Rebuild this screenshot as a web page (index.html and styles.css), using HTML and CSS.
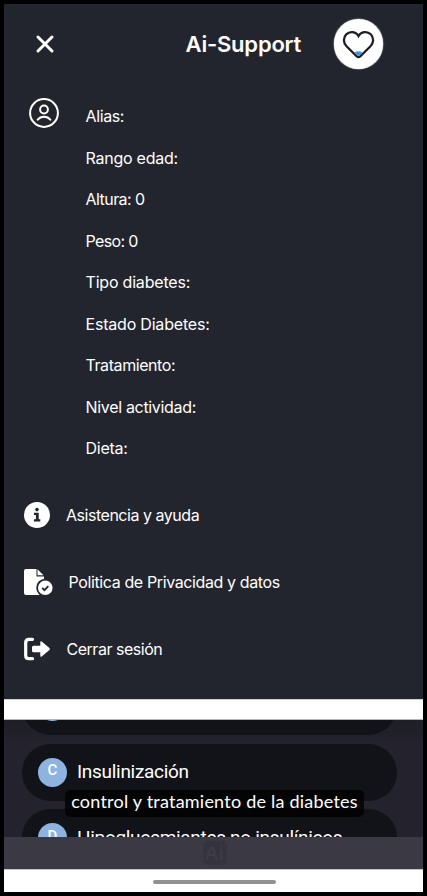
FILE: index.html
```html
<!DOCTYPE html>
<html lang="es">
<head>
<meta charset="utf-8">
<title>Ai-Support</title>
<link rel="stylesheet" href="styles.css">
</head>
<body>
<div class="screen">
  <section class="drawer">
    <header class="header">
      <svg class="close" viewBox="0 0 20 20"><path d="M3 3l14 14M17 3L3 17"/></svg>
      <h1 class="title">Ai-Support</h1>
      <div class="logo">
        <svg viewBox="0 0 34 30"><path class="drop" d="M13 23q4-2 8 0l-4 4z"/><path class="heart" d="M17 6.3C14.500 1.500 8 .8 4.300 4.500c-3.500 3.600-3 9 .3 12.300l10.600 10.500q1.800 1.500 3.600 0l10.600-10.500c3.300-3.300 3.800-8.700.3-12.300C26 .8 19.500 1.500 17 6.300z"/></svg>
      </div>
    </header>
    <div class="profile">
      <svg class="avatar" viewBox="0 0 32 32"><circle cx="16" cy="16" r="13.900"/><circle cx="16" cy="12.500" r="3.900"/><path d="M9.700 22.700c3-4 9.600-4 12.600 0"/></svg>
      <ul class="fields">
        <li class="f1">Alias:</li>
        <li class="f2">Rango edad:</li>
        <li class="f3">Altura: 0</li>
        <li class="f4">Peso: 0</li>
        <li class="f5">Tipo diabetes:</li>
        <li class="f6">Estado Diabetes:</li>
        <li class="f7">Tratamiento:</li>
        <li class="f8">Nivel actividad:</li>
        <li class="f9">Dieta:</li>
      </ul>
    </div>
    <nav class="menu">
      <a class="m1"><svg width="26" height="26" viewBox="0 0 26 26"><circle class="solid" cx="13" cy="13" r="13"/><circle class="cut" cx="13" cy="7.600" r="1.800"/><path class="cut" d="M10 10.800h4.700v6.400h1.600v2.300H9.900v-2.300h2v-4.100H10z"/></svg><span>Asistencia y ayuda</span></a>
      <a class="m2"><svg width="29" height="28" viewBox="0 0 29 28"><path class="solid" d="M2 1h10.500v7.500H20V27H2q-2 0-2-2V3q0-2 2-2z"/><path class="solid" d="M13.500 1.300l6 6h-6z"/><circle class="ring" cx="21.300" cy="19.800" r="8.200"/><path class="tick" d="M18.200 19.900l2.200 2.200 3.900-4"/></svg><span>Politica de Privacidad y datos</span></a>
      <a class="m3"><svg width="27" height="24" viewBox="0 0 27 24"><path class="door" d="M8.500 2.300H5Q1.700 2.300 1.700 5.600v12.800q0 3.300 3.300 3.300h3.500"/><path class="solid" d="M9.500 8.700h6.800V5.200q0-1.700 1.400-.7l7.700 6.500q1 1 0 2l-7.700 6.500q-1.400 1-1.400-.7v-3.500H9.500q-1.500 0-1.500-1.500v-3.600q0-1.500 1.500-1.500z"/></svg><span>Cerrar sesión</span></a>
    </nav>
  </section>
  <div class="strip"></div>
  <section class="list">
    <div class="card"><span class="badge"></span></div>
    <div class="card"><span class="badge">C</span><span class="name n1">Insulinización</span></div>
    <div class="card"><span class="badge">D</span><span class="name n2">Hipoglucemiantes no insulínicos</span></div>
    <div class="caption"><span>control y tratamiento de la diabetes</span></div>
  </section>
  <div class="tabbar"><span>Ai</span></div>
  <div class="gesture"><i></i></div>
</div>
</body>
</html>
```
FILE: styles.css
```css
* { box-sizing: border-box; }
body { margin: 0; background: #000; font-family: Inter, "Liberation Sans", sans-serif; color: #fff; }
.screen { width: 427px; height: 896px; padding: 4px; display: flex; flex-direction: column; overflow: hidden; }
.drawer { height: 695px; background: #23252e; flex: none; }
.header { height: 80px; display: flex; align-items: center; padding-left: 31px; }
.close { width: 20px; height: 20px; fill: none; stroke: #fff; stroke-width: 3; stroke-linecap: round; }
.title { margin: 0 0 0 130.500px; width: 148px; font-size: 22px; line-height: 28px; font-weight: 600; letter-spacing: -0.200px; white-space: nowrap; }
.logo { width: 49.500px; height: 49.500px; border-radius: 50%; background: #fff; box-shadow: 0 0 1px 0.500px #8d8d92; display: flex; justify-content: center; align-items: center; }
.logo svg { width: 33px; height: 29px; margin-left: 1px; }
.heart { fill: none; stroke: #1b1d29; stroke-width: 2.300; }
.drop { fill: #2d9bd8; }
.profile { display: flex; height: 396px; padding: 12px 0 0 24px; }
.avatar { width: 32px; height: 32px; margin-top: 1px; fill: none; stroke: #fff; stroke-width: 2; stroke-linecap: round; flex: none; }
.fields { list-style: none; margin: 0 0 0 25.500px; padding: 0; font-size: 16px; line-height: 41.500px; }
.fields li { height: 41.500px; white-space: nowrap; letter-spacing: -0.250px; }
.fields .f1 { letter-spacing: -0.380px; }
.fields .f8 { letter-spacing: -0.320px; }
.fields .f3 { letter-spacing: -0.550px; }
.fields .f7 { letter-spacing: -0.420px; }
.fields .f4 { letter-spacing: -0.650px; }
.fields .f5, .fields .f6 { letter-spacing: -0.200px; }
.menu { display: flex; flex-direction: column; padding: 2px 0 0 20px; }
.menu a { height: 66.700px; display: flex; align-items: center; font-size: 16px; white-space: nowrap; }
.m1 { gap: 16px; letter-spacing: -0.470px; }
.m2 { gap: 15.500px; letter-spacing: -0.380px; }
.m3 { gap: 15.500px; letter-spacing: -0.480px; }
.solid { fill: #fff; }
.cut { fill: #23252e; }
.ring { fill: #fff; stroke: #23252e; stroke-width: 1.800; }
.tick { fill: none; stroke: #23252e; stroke-width: 1.800; }
.door { fill: none; stroke: #fff; stroke-width: 3.200; stroke-linecap: round; }
.strip { height: 21px; flex: none; background: #fff; border-top: 1px solid #d0d0d5; border-bottom: 1px solid #b5b5bc; }
.list { height: 117px; flex: none; overflow: hidden; position: relative; background: linear-gradient(#1f1f28, #23222d 24px); padding: 0 26px 0 18px; display: flex; flex-direction: column; gap: 8.500px; }
.card { height: 57px; flex: none; border-radius: 29px; background: #121318; display: flex; align-items: center; padding-left: 16px; }
.card:first-child { margin-top: -42px; }
.badge { width: 29px; height: 29px; border-radius: 50%; background: #8fb3e1; display: flex; align-items: center; justify-content: center; font: 500 15px/24px Roboto, sans-serif; padding-bottom: 4px; margin-right: 10px; }
.name { font: 400 19px/24px Roboto, sans-serif; white-space: nowrap; }
.n1 { letter-spacing: -0.300px; }
.n2 { letter-spacing: -0.310px; }
.caption { position: absolute; left: 61px; top: 70px; width: 299px; height: 27px; border-radius: 5px; background: rgba(0,0,0,.78); font: 18px/23px Lato, sans-serif; letter-spacing: 0.220px; text-align: center; white-space: nowrap; }
.tabbar { height: 32px; flex: none; background: #3b3a44; display: flex; align-items: center; justify-content: center; padding-left: 2px; }
.tabbar span { width: 24px; height: 24px; border-radius: 5px; background: #34333e; color: #3d3c47; font: 600 20px/24px "Open Sans", sans-serif; text-align: center; }
.gesture { height: 23px; flex: none; background: #fff; border-top: 1px solid #c5c5ca; display: flex; justify-content: center; padding: 10px 0 0 1px; }
.gesture i { width: 123px; height: 4px; border-radius: 2px; background: #929292; }
```
